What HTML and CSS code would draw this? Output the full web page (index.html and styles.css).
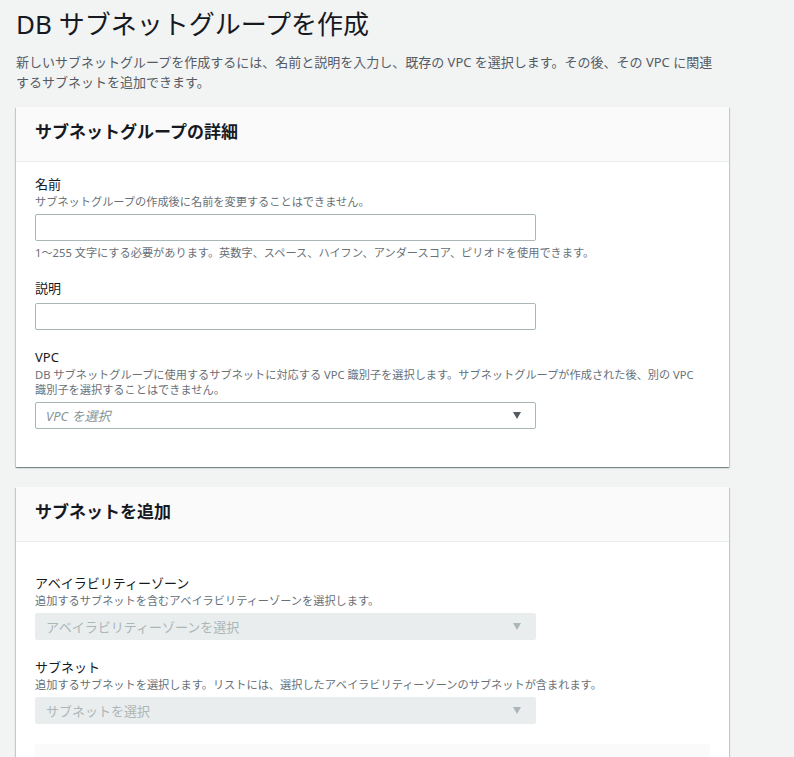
FILE: index.html
```html
<!DOCTYPE html>
<html lang="ja">
<head>
<meta charset="utf-8">
<title>DB サブネットグループを作成</title>
<link rel="stylesheet" href="styles.css">
</head>
<body>
<main class="page">
  <h1 class="page-title">DB サブネットグループを作成</h1>
  <p class="page-desc">新しいサブネットグループを作成するには、名前と説明を入力し、既存の VPC を選択します。その後、その VPC に関連<br>するサブネットを追加できます。</p>

  <section class="card">
    <div class="card-header"><h2 class="card-title">サブネットグループの詳細</h2></div>
    <div class="card-body">
      <div class="field">
        <div class="field-label">名前</div>
        <div class="field-desc">サブネットグループの作成後に名前を変更することはできません。</div>
        <div class="input"></div>
        <div class="field-hint">1〜255 文字にする必要があります。英数字、スペース、ハイフン、アンダースコア、ピリオドを使用できます。</div>
      </div>
      <div class="field field-gap-lg">
        <div class="field-label">説明</div>
        <div class="input"></div>
      </div>
      <div class="field">
        <div class="field-label">VPC</div>
        <div class="field-desc">DB サブネットグループに使用するサブネットに対応する VPC 識別子を選択します。サブネットグループが作成された後、別の VPC<br>識別子を選択することはできません。</div>
        <div class="select"><span class="select-placeholder italic">VPC を選択</span><span class="caret"></span></div>
      </div>
    </div>
  </section>

  <section class="card">
    <div class="card-header"><h2 class="card-title">サブネットを追加</h2></div>
    <div class="card-body card-body-tall">
      <div class="field">
        <div class="field-label">アベイラビリティーゾーン</div>
        <div class="field-desc">追加するサブネットを含むアベイラビリティーゾーンを選択します。</div>
        <div class="select disabled"><span class="select-placeholder">アベイラビリティーゾーンを選択</span><span class="caret"></span></div>
      </div>
      <div class="field">
        <div class="field-label">サブネット</div>
        <div class="field-desc">追加するサブネットを選択します。リストには、選択したアベイラビリティーゾーンのサブネットが含まれます。</div>
        <div class="select disabled"><span class="select-placeholder">サブネットを選択</span><span class="caret"></span></div>
      </div>
      <div class="selected-box"></div>
    </div>
  </section>
</main>
</body>
</html>
```

FILE: styles.css
```css
html, body {
  margin: 0;
  padding: 0;
  background: #f2f3f3;
}

body {
  font-family: "Noto Sans", "Noto Sans CJK JP", sans-serif;
  color: #16191f;
  overflow: hidden;
}

.page {
  padding: 6px 0 0 16px;
  width: 713px;
}

.page-title {
  margin: 0;
  font-size: 26px;
  line-height: 36px;
  font-weight: 400;
  color: #16191f;
}

.page-desc {
  margin: 10px 0 0;
  font-size: 13px;
  line-height: 20px;
  color: #545b64;
}

.card {
  margin-top: 15px;
  background: #ffffff;
  box-shadow: 0 1px 1px 0 rgba(0, 28, 36, 0.3), 1px 1px 1px 0 rgba(0, 28, 36, 0.15), -1px 1px 1px 0 rgba(0, 28, 36, 0.15);
}

.card + .card {
  margin-top: 20px;
}

.card-header {
  background: #fafafa;
  border-bottom: 1px solid #eaeded;
  padding: 14px 19px 18px;
}

.card-title {
  margin: 0;
  font-size: 17px;
  line-height: 22px;
  font-weight: 700;
  color: #16191f;
}

.card-body {
  padding: 12px 19px 38px;
}

.card-body-tall {
  padding-top: 31px;
  padding-bottom: 0;
}

.field + .field {
  margin-top: 17px;
}

.field + .field-gap-lg {
  margin-top: 18px;
}

.field-label {
  font-size: 13px;
  line-height: 20px;
  color: #16191f;
}

.field-desc,
.field-hint {
  font-size: 11.2px;
  line-height: 15px;
  color: #687078;
}

.field-hint {
  margin-top: 4px;
}

.input,
.select {
  box-sizing: border-box;
  width: 501px;
  height: 27px;
  margin-top: 5px;
  border: 1px solid #aab7b8;
  border-radius: 2px;
  background: #ffffff;
}

.select {
  display: flex;
  align-items: center;
  justify-content: space-between;
  padding: 0 14px 0 10px;
}

.select-placeholder {
  font-size: 13px;
  line-height: 20px;
  color: #aab7b8;
}

.italic {
  font-style: italic;
  color: #879596;
}

.caret {
  width: 0;
  height: 0;
  border-left: 4.5px solid transparent;
  border-right: 4.5px solid transparent;
  border-top: 7px solid #545b64;
}

.select.disabled {
  background: #eaeded;
  border-color: #eaeded;
}

.select.disabled .caret {
  border-top-color: #aab7b8;
}

.selected-box {
  margin-top: 20px;
  height: 120px;
  width: 675px;
  background: #fafafa;
}
```
